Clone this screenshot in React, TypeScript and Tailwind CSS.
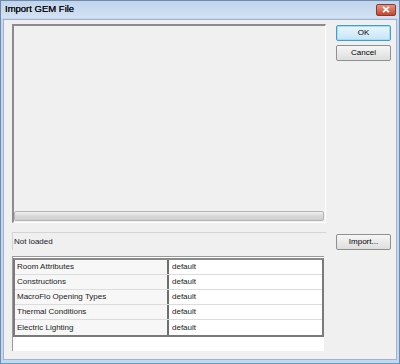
const rows = [
  "Room Attributes",
  "Constructions",
  "MacroFlo Opening Types",
  "Thermal Conditions",
  "Electric Lighting",
];

const Button = ({ label, primary }: { label: string; primary?: boolean }) => (
  <button
    className={
      "w-[55px] h-[16px] rounded-[2px] border text-[8px] leading-none text-black flex items-center justify-center " +
      (primary
        ? "border-[#3c9fd6] bg-gradient-to-b from-[#eaf6fd] to-[#c6e4f7] shadow-[inset_0_0_0_1px_#a8dcf6]"
        : "border-[#8e8f8f] bg-gradient-to-b from-[#f6f6f6] to-[#dedede]")
    }
  >
    {label}
  </button>
);

export default function App() {
  return (
    <div
      className="w-[400px] h-[364px] bg-[#c4d7ee] border border-[#6e8bae] border-b-[#4fa3c7] flex flex-col overflow-hidden"
      style={{ fontFamily: '"Liberation Sans", Arial, sans-serif' }}
    >
      {/* title bar */}
      <div className="h-[17px] shrink-0 flex items-center justify-between pl-[4px] pr-[3px] bg-gradient-to-b from-[#c0d4ec] to-[#d3e2f3]">
        <span className="text-[9.5px] text-[#111] [text-shadow:0_0_0.3px_#000]">
          Import GEM File
        </span>
        <div className="w-[20px] h-[12px] rounded-[2px] border border-[#8a3a2c] bg-gradient-to-b from-[#e3947f] to-[#c4452e] flex items-center justify-center">
          <svg width="8" height="7" viewBox="0 0 8 7">
            <path d="M1 0.8 L7 6.2 M7 0.8 L1 6.2" stroke="white" strokeWidth="1.8" />
          </svg>
        </div>
      </div>

      {/* client area */}
      <div className="flex-1 mx-[2px] mb-[3px] mt-px bg-[#f0f0f0] border border-[#9fb3cc] flex gap-[10px] pl-[8px] pt-[4px]">
        <div className="w-[314px] flex flex-col">
          {/* preview panel */}
          <div className="h-[199px] border-t-2 border-l-2 border-t-[#8c8c8c] border-l-[#8c8c8c] border-b border-r border-b-white border-r-white flex flex-col justify-end pb-px pr-px">
            <div className="h-[10px] rounded-[2px] border border-[#b4b4b4] bg-gradient-to-b from-[#f0f0f0] via-[#d9d9d9] to-[#cfcfcf]" />
          </div>

          {/* status */}
          <div className="mt-[9px] h-[18px] border-t border-l border-[#d4d4d4] border-b-white border-r-white flex items-center pl-px">
            <span className="text-[8px] text-[#1a1a2a]">Not loaded</span>
          </div>

          {/* attribute list */}
          <div className="mt-[6px] h-[95px] w-[312px] bg-white border-t border-l border-[#9a9a9a] pt-px">
            <div className="border-2 border-[#7a7a7a] border-t-[#8a8a8a] w-[311px]">
              {rows.map((r, i) => (
                <div
                  key={r}
                  className={
                    "flex h-[15px] " + (i < rows.length - 1 ? "border-b border-b-[#dcdcdc]" : "")
                  }
                >
                  <div className="w-[154px] bg-[#f7f7f7] border-r-2 border-r-[#6e6e6e] pl-[2px] flex items-center text-[8px] text-[#222]">
                    {r}
                  </div>
                  <div className="flex-1 pl-[3px] flex items-center text-[8px] text-[#222]">
                    default
                  </div>
                </div>
              ))}
            </div>
          </div>
        </div>

        {/* buttons */}
        <div className="flex flex-col">
          <div className="mt-px">
            <Button label="OK" primary />
          </div>
          <div className="mt-[4px]">
            <Button label="Cancel" />
          </div>
          <div className="mt-[173px]">
            <Button label="Import..." />
          </div>
        </div>
      </div>
    </div>
  );
}
